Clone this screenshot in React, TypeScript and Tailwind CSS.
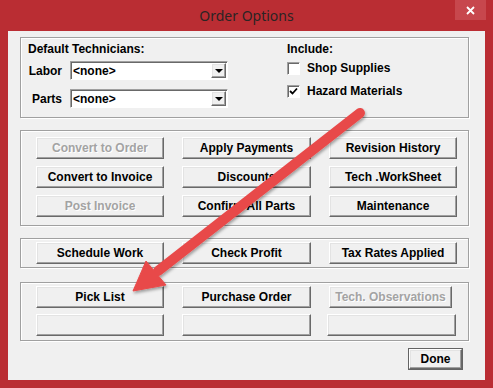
import React from 'react';

const raised =
  'bg-[#f0f0f0] border border-t-white border-l-white border-b-[#696969] border-r-[#696969] shadow-[inset_-1px_-1px_0_#a0a0a0,inset_1px_1px_0_#e3e3e3]';

function Btn({ label, disabled, className = 'w-[128px]' }: { label?: string; disabled?: boolean; className?: string }) {
  return (
    <div
      className={`${className} h-[22px] flex items-center justify-center text-[12px] font-bold leading-none ${raised} ${
        disabled ? 'text-[#a3a3a3] [text-shadow:1px_1px_0_#fff]' : 'text-black'
      }`}
    >
      {label}
    </div>
  );
}

function Group({ className, children }: { className: string; children: React.ReactNode }) {
  return (
    <div className={`w-[449px] border border-[#a0a0a0] shadow-[inset_1px_1px_0_#fff,1px_1px_0_#fff] ${className}`}>
      {children}
    </div>
  );
}

function Combo() {
  return (
    <div className="w-[158px] h-[19px] bg-white border border-t-[#a0a0a0] border-l-[#a0a0a0] border-b-white border-r-white shadow-[inset_1px_1px_0_#696969] flex items-center">
      <span className="pl-[2px] text-[12px] font-bold text-black leading-none flex-1">&lt;none&gt;</span>
      <div className={`w-[15px] h-[15px] mr-[1px] flex items-center justify-center ${raised}`}>
        <div className="w-0 h-0 border-l-[4px] border-r-[4px] border-t-[4px] border-l-transparent border-r-transparent border-t-black" />
      </div>
    </div>
  );
}

function Check({ label, checked }: { label: string; checked?: boolean }) {
  return (
    <div className="h-[16px] flex items-center">
      <div className="w-[13px] h-[13px] bg-white border border-t-[#a0a0a0] border-l-[#a0a0a0] border-b-white border-r-white shadow-[inset_1px_1px_0_#696969] flex items-center justify-center">
        {checked && (
          <svg width="9" height="9" viewBox="0 0 9 9">
            <path d="M1 4 L3.5 6.5 L8 1.5" stroke="black" strokeWidth="1.8" fill="none" />
          </svg>
        )}
      </div>
      <span className="ml-[7px] text-[12px] font-bold text-black leading-none">{label}</span>
    </div>
  );
}

export default function App() {
  return (
    <div className="relative w-[493px] h-[388px] bg-[#ba2d33] overflow-hidden" style={{ fontFamily: '"Liberation Sans", Arial, sans-serif' }}>
      {/* Title bar */}
      <div className="h-[31px] relative flex items-center justify-center">
        <span className="text-[14px] text-[#2b2424] mt-[-1px]" style={{ fontFamily: '"Noto Sans", sans-serif' }}>
          Order Options
        </span>
        <div className="absolute top-0 right-[7px] w-[31px] h-[20px] bg-[#c7474d] flex items-center justify-center">
          <svg width="9" height="9" viewBox="0 0 9 9">
            <path d="M1 1 L8 8 M8 1 L1 8" stroke="white" strokeWidth="1.8" />
          </svg>
        </div>
      </div>

      {/* Client area */}
      <div className="mx-[8px] h-[349px] bg-[#f0f0f0] pl-[12px] pt-[6px] flex flex-col">
        <Group className="h-[81px] flex">
          <div className="w-[207px] pl-[7px] pt-[4px] flex flex-col">
            <span className="text-[12px] font-bold text-black leading-[14px]">Default Technicians:</span>
            <div className="mt-[5px] flex items-center">
              <span className="w-[42px] pr-[8px] text-right text-[12px] font-bold text-black leading-none">Labor</span>
              <Combo />
            </div>
            <div className="mt-[9px] flex items-center">
              <span className="w-[42px] pr-[8px] text-right text-[12px] font-bold text-black leading-none">Parts</span>
              <Combo />
            </div>
          </div>
          <div className="ml-[59px] pt-[4px] flex flex-col">
            <span className="text-[12px] font-bold text-black leading-[14px]">Include:</span>
            <div className="mt-[4px] flex flex-col gap-[7px]">
              <Check label="Shop Supplies" />
              <Check label="Hazard Materials" checked />
            </div>
          </div>
        </Group>

        <Group className="mt-[12px] h-[96px] pt-[6px] pl-[15px]">
          <div className="grid grid-cols-[128px_129px_128px] gap-x-[18px] gap-y-[7px]">
            <Btn label="Convert to Order" disabled />
            <Btn label="Apply Payments" className="w-[129px]" />
            <Btn label="Revision History" />
            <Btn label="Convert to Invoice" />
            <Btn label="Discounts" className="w-[129px]" />
            <Btn label="Tech .WorkSheet" />
            <Btn label="Post Invoice" disabled />
            <Btn label="Confirm All Parts" className="w-[129px]" />
            <Btn label="Maintenance" />
          </div>
        </Group>

        <Group className="mt-[12px] h-[30px] pt-[3px] pl-[15px]">
          <div className="grid grid-cols-[128px_129px_128px] gap-x-[18px]">
            <Btn label="Schedule Work" />
            <Btn label="Check Profit" className="w-[129px]" />
            <Btn label="Tax Rates Applied" />
          </div>
        </Group>

        <Group className="mt-[14px] h-[59px] pt-[3px] pl-[15px]">
          <div className="grid grid-cols-[128px_129px_128px] gap-x-[18px] gap-y-[6px]">
            <Btn label="Pick List" />
            <Btn label="Purchase Order" className="w-[129px]" />
            <Btn label="Tech. Observations" disabled className="w-[123px]" />
            <Btn />
            <Btn className="w-[129px]" />
            <Btn className="w-[129px] ml-[-2px]" />
          </div>
        </Group>

        <div className="w-[449px] flex justify-end mt-[7px]">
          <div className="mr-[6px] w-[55px] h-[22px] border border-[#646464] flex">
            <Btn label="Done" className="w-full h-full" />
          </div>
        </div>
      </div>

      {/* Annotation arrow */}
      <svg className="absolute inset-0 pointer-events-none" width="493" height="388" viewBox="0 0 493 388">
        <defs>
          <filter id="sh" x="-20%" y="-20%" width="140%" height="140%">
            <feDropShadow dx="1" dy="2" stdDeviation="1.5" floodColor="#000" floodOpacity="0.35" />
          </filter>
        </defs>
        <g filter="url(#sh)" fill="#e84a4a" stroke="#e84a4a">
          <line x1="360" y1="113" x2="158" y2="271" strokeWidth="10" strokeLinecap="round" />
          <polygon points="133,291 146,261 166,285" strokeWidth="1" strokeLinejoin="round" />
        </g>
      </svg>
    </div>
  );
}
